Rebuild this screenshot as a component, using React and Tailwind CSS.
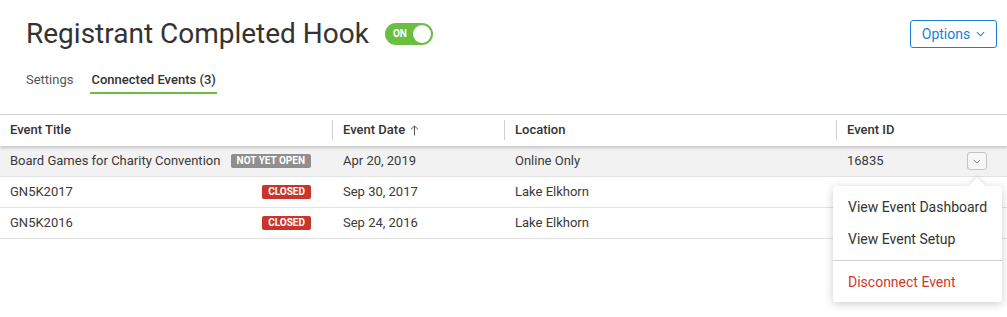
import React from 'react';

const rows = [
  { title: 'Board Games for Charity Convention', status: 'NOT YET OPEN', date: 'Apr 20, 2019', location: 'Online Only', id: '16835', active: true },
  { title: 'GN5K2017', status: 'CLOSED', date: 'Sep 30, 2017', location: 'Lake Elkhorn', id: '' },
  { title: 'GN5K2016', status: 'CLOSED', date: 'Sep 24, 2016', location: 'Lake Elkhorn', id: '' },
];

const Chevron = ({ className }) => (
  <svg viewBox="0 0 10 6" className={className} fill="none" stroke="currentColor" strokeWidth="1.2">
    <path d="M1 1l4 4 4-4" />
  </svg>
);

// Header cell with a short divider on its left
const HeadCell = ({ width, divider, children }) => (
  <div className={`flex items-center h-full ${width}`}>
    {divider && <div className="w-px h-[20px] bg-[#d0d0d0]" />}
    <div className="flex items-center pl-[10px]">{children}</div>
  </div>
);

const Badge = ({ status }) => (
  <span
    className={`inline-flex items-center h-[14px] px-[6px] rounded-[2px] text-[10px] font-bold text-white leading-none ${
      status === 'CLOSED' ? 'bg-[#c9352b]' : 'bg-[#8f8f8f]'
    }`}
  >
    {status}
  </span>
);

export default function App() {
  return (
    <div className="relative w-[1007px] h-[317px] overflow-hidden bg-white font-['Roboto',sans-serif] text-[#333]">
      {/* Title bar */}
      <div className="flex items-center justify-between pl-[26px] pr-[10px] pt-[20px]">
        <div className="flex items-center h-[28px]">
          <h1 className="text-[28px] leading-[28px] font-normal text-[#333]">Registrant Completed Hook</h1>
          <div className="ml-[16px] flex items-center justify-between w-[48px] h-[22px] rounded-full bg-[#6abf40] pl-[8px] pr-[2px]">
            <span className="text-[10px] font-bold text-white leading-none">ON</span>
            <span className="w-[18px] h-[18px] rounded-full bg-white" />
          </div>
        </div>
        <button className="flex items-center gap-[6px] h-[28px] w-[87px] justify-center border border-[#1a7fd6] rounded-[3px] text-[14px] text-[#1a7fd6]">
          Options
          <Chevron className="w-[9px] h-[6px]" />
        </button>
      </div>

      {/* Tabs */}
      <div className="flex pl-[25px] mt-[22px] gap-[16px] text-[13px]">
        <div className="px-px pb-[2px] leading-[20px] border-b-2 border-transparent text-[#555]">Settings</div>
        <div className="px-px pb-[2px] leading-[20px] border-b-2 border-[#6abf40] font-medium text-[#333]">
          Connected Events (3)
        </div>
      </div>

      {/* Table */}
      <div className="mt-[20px] border-t border-[#d5d5d5] text-[13px]">
        <div className="relative z-10 flex h-[31px] pb-px bg-white font-medium text-[#333] shadow-[0_2px_3px_rgba(0,0,0,0.18)]">
          <HeadCell width="w-[332px]">Event Title</HeadCell>
          <HeadCell width="w-[172px]" divider>
            Event Date
            <svg viewBox="0 0 10 12" className="ml-[5px] w-[9px] h-[11px]" fill="none" stroke="#555" strokeWidth="1.1">
              <path d="M5 11.5V1M1 4.8L5 1l4 3.8" />
            </svg>
          </HeadCell>
          <HeadCell width="w-[332px]" divider>Location</HeadCell>
          <HeadCell width="w-[171px]" divider>Event ID</HeadCell>
        </div>

        {rows.map((r) => (
          <div
            key={r.title}
            className={`flex items-center h-[31px] border-b border-[#e3e3e3] text-[#3a3a3a] ${r.active ? 'bg-[#f2f2f2]' : 'bg-white'}`}
          >
            <div className="w-[332px] flex items-center justify-between pl-[10px] pr-[21px]">
              <span>{r.title}</span>
              <Badge status={r.status} />
            </div>
            <div className="w-[172px] pl-[11px]">{r.date}</div>
            <div className="w-[332px] pl-[11px]">{r.location}</div>
            <div className="w-[171px] pl-[11px] pr-[20px] flex items-center justify-between">
              <span>{r.id}</span>
              {r.active && (
                <span className="flex items-center justify-center w-[20px] h-[18px] border border-[#c4c4c4] rounded-[3px] bg-[#f7f7f7] text-[#888]">
                  <Chevron className="w-[8px] h-[5px]" />
                </span>
              )}
            </div>
          </div>
        ))}
      </div>

      {/* Row actions menu */}
      <div className="absolute left-[833px] top-[186px] w-[169px] rounded-[3px] bg-white shadow-[0_2px_10px_rgba(0,0,0,0.2)] pt-[5px] pb-[4px] text-[14px]">
        <div className="absolute -top-[6px] left-[138px] w-[12px] h-[12px] rotate-45 bg-white shadow-[-2px_-2px_4px_rgba(0,0,0,0.08)]" />
        <div className="relative flex items-center h-[32px] pl-[15px] text-[#333]">View Event Dashboard</div>
        <div className="relative flex items-center h-[32px] pl-[15px] text-[#333]">View Event Setup</div>
        <div className="my-[5px] h-px bg-[#cfcfcf]" />
        <div className="flex items-center h-[32px] pl-[15px] text-[#d0392e]">Disconnect Event</div>
      </div>
    </div>
  );
}
